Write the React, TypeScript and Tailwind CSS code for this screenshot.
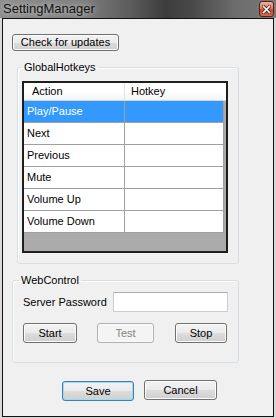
import type { ReactNode } from "react";

// Windows 7 style settings dialog, drawn at 276x418.

const rows = ["Play/Pause", "Next", "Previous", "Mute", "Volume Up", "Volume Down"];

function WinButton({
    children,
    className = "",
    disabled = false,
    isDefault = false,
}: {
    children: ReactNode;
    className?: string;
    disabled?: boolean;
    isDefault?: boolean;
}) {
    const tone = disabled
        ? "border-[#adb2b5] bg-[#f4f4f4] text-[#838383] shadow-[inset_0_0_0_1px_#fafafa]"
        : isDefault
          ? "border-[#3c7fb1] bg-[linear-gradient(180deg,#f2f2f2_0%,#ebebeb_50%,#dddddd_51%,#cfcfcf_100%)] text-black shadow-[inset_0_0_0_1px_#9edbf5]"
          : "border-[#707070] bg-[linear-gradient(180deg,#f2f2f2_0%,#ebebeb_50%,#dddddd_51%,#cfcfcf_100%)] text-black shadow-[inset_0_0_0_1px_#fcfcfc]";
    return (
        <button
            type="button"
            disabled={disabled}
            className={`shrink-0 rounded-[3px] border text-[11px] leading-none flex items-center justify-center ${tone} ${className}`}
        >
            {children}
        </button>
    );
}

export default function App() {
    return (
        <div className="w-[276px] h-[418px] bg-[#d9d9d9] flex flex-col font-['Liberation_Sans',Arial,sans-serif] text-black">
            {/* title bar */}
            <div className="h-[18px] shrink-0 flex items-start justify-between pl-[3px] pr-[2px] bg-[linear-gradient(90deg,#8e8e8e_0%,#7e7e7e_30%,#5a5a5a_48%,#3c3c3c_60%,#4a4a4a_70%,#6c6c6c_85%,#7a7a7a_100%)]">
                <span className="text-[13px] leading-[18px] text-[#111] [text-shadow:0_0_6px_rgba(255,255,255,0.75)]">
                    SettingManager
                </span>
                <div className="mt-[1px] w-[15px] h-[16px] rounded-[3px] border border-[#5c1f14] bg-[linear-gradient(180deg,#eab0a0_0%,#dc8068_45%,#c74a2e_55%,#d46a4c_100%)] flex items-center justify-center">
                    <svg width="9" height="9" viewBox="0 0 9 9">
                        <path d="M1.5 1.5 L7.5 7.5 M7.5 1.5 L1.5 7.5" stroke="#5a2015" strokeWidth="3.2" strokeLinecap="square" />
                        <path d="M1.5 1.5 L7.5 7.5 M7.5 1.5 L1.5 7.5" stroke="#ffffff" strokeWidth="1.6" strokeLinecap="square" />
                    </svg>
                </div>
            </div>

            {/* client area */}
            <div className="mx-[2px] h-[399px] border border-[#111] bg-[#f0f0f0] flex flex-col">
                <WinButton className="mt-[15px] ml-[9px] w-[107px] h-[17px]">Check for updates</WinButton>

                <fieldset className="mt-[9px] ml-[14px] w-[222px] h-[204px] rounded-[3px] border border-[#d5dfe5] shadow-[inset_1px_1px_0_#fff]">
                    <legend className="ml-[4px] px-[2px] text-[11px] leading-[14px]">GlobalHotkeys</legend>
                    <div className="mt-[7px] ml-[4px] w-[206px] h-[172px] border-2 border-[#1e1e1e] bg-[#ababab] flex flex-col">
                        <div className="h-[18px] flex bg-[linear-gradient(180deg,#ffffff_0%,#ffffff_50%,#f4f4f4_100%)] border-b border-[#d5d5d5]">
                            <div className="w-[101px] border-r border-[#e3e3e3] pl-[8px] text-[11px] leading-[17px]">Action</div>
                            <div className="w-[98px] pl-[6px] text-[11px] leading-[17px]">Hotkey</div>
                            <div className="flex-1 bg-white" />
                        </div>
                        {rows.map((r, i) => (
                            <div
                                key={r}
                                className={`h-[22px] w-[200px] flex text-[11px] leading-[21px] ${i === 0 ? "bg-[#3399ff] text-white" : "bg-white"}`}
                            >
                                <div className="w-[101px] border-r border-b border-[#a0a0a0] pl-[3px]">{r}</div>
                                <div className="w-[99px] border-r border-b border-[#a0a0a0]" />
                            </div>
                        ))}
                    </div>
                </fieldset>

                <fieldset className="mt-[9px] ml-[9px] w-[227px] h-[90px] rounded-[3px] border border-[#d5dfe5] shadow-[inset_1px_1px_0_#fff]">
                    <legend className="ml-[6px] px-[2px] text-[11px] leading-[14px]">WebControl</legend>
                    <div className="mt-[5px] pl-[10px] flex items-center">
                        <span className="w-[90px] text-[11px]">Server Password</span>
                        <div className="w-[115px] h-[20px] border border-[#c9ccd1] border-t-[#abadb3] bg-white" />
                    </div>
                    <div className="mt-[11px] pl-[10px] flex">
                        <WinButton className="w-[54px] h-[20px]">Start</WinButton>
                        <WinButton disabled className="ml-[20px] w-[57px] h-[20px]">Test</WinButton>
                        <WinButton className="ml-[21px] w-[52px] h-[20px]">Stop</WinButton>
                    </div>
                </fieldset>

                <div className="mt-[17px] ml-[59px] flex items-start">
                    <WinButton isDefault className="mt-[1px] w-[72px] h-[20px]">Save</WinButton>
                    <WinButton className="ml-[10px] w-[73px] h-[20px]">Cancel</WinButton>
                </div>
            </div>
        </div>
    );
}
